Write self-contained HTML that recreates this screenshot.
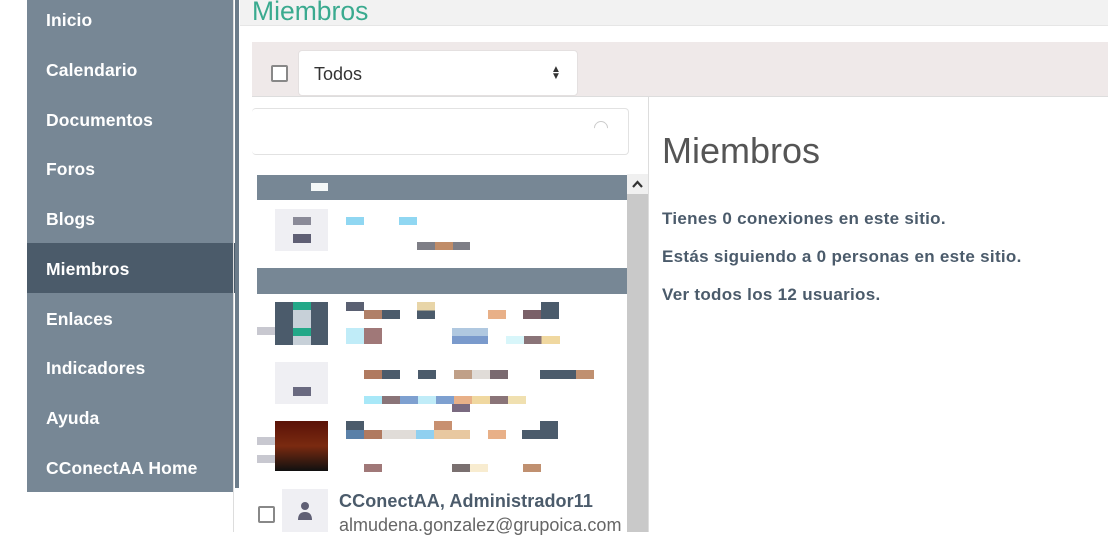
<!DOCTYPE html>
<html><head><meta charset="utf-8"><style>
*{margin:0;padding:0;box-sizing:border-box}
body{width:1108px;height:532px;overflow:hidden;background:#fff;font-family:"Liberation Sans",sans-serif;position:relative}
.a{position:absolute}
.nav{left:27px;top:0;width:206px;height:492px;background:#778795}
.nav div{position:absolute;left:0;width:212px;height:50px;color:#fff;font-weight:bold;font-size:17.5px;padding-left:19px;line-height:50px;letter-spacing:0.1px}
.b{position:absolute}
</style></head><body>
<div class="a nav">
<div style="top:-5px">Inicio</div>
<div style="top:45px">Calendario</div>
<div style="top:95px">Documentos</div>
<div style="top:144px">Foros</div>
<div style="top:194px">Blogs</div>
<div style="top:243px;background:#4b5b6a;line-height:52px">Miembros</div>
<div style="top:294px">Enlaces</div>
<div style="top:343px">Indicadores</div>
<div style="top:393px">Ayuda</div>
<div style="top:443px">CConectAA Home</div>
</div>
<div class="a" style="left:233px;top:0;width:1px;height:532px;background:#ddd"></div>
<div class="a" style="left:235px;top:0;width:4px;height:488px;background:#6c7c8a"></div>
<div class="a" style="left:240px;top:0;width:868px;height:26px;background:#f2f2f2;border-bottom:1px solid #e6e6e6"></div>
<div class="a" style="left:252px;top:-4px;font-size:26.5px;color:#3aaa8f">Miembros</div>
<div class="a" style="left:252px;top:42px;width:856px;height:55px;background:#efe9e9;border-bottom:1px solid #ddd"></div>
<div class="a" style="left:271px;top:65px;width:17px;height:17px;border:2px solid #888;border-radius:2px;background:#fff"></div>
<div class="a" style="left:298px;top:50px;width:280px;height:46px;background:#fff;border-radius:4px;border:1px solid #e4e0e0"></div>
<div class="a" style="left:314px;top:64px;font-size:18px;color:#333">Todos</div>
<div class="a" style="left:551px;top:66px;font-size:10px;line-height:7px;color:#333">▲<br>▼</div>
<div class="a" style="left:648px;top:97px;width:1px;height:435px;background:#ddd"></div>
<div class="a" style="left:252px;top:108px;width:377px;height:47px;border:1px solid #e2e2e2;border-radius:4px;border-left:none"></div>
<div class="a" style="left:594px;top:121px;width:14px;height:14px;border:1.5px solid #ccc;border-radius:50%;border-bottom-color:transparent;border-left-color:transparent;transform:rotate(-45deg)"></div>
<div class="a" style="left:627px;top:174px;width:21px;height:358px;background:#c9c9c9"></div>
<div class="a" style="left:627px;top:174px;width:21px;height:20px;background:#f0f0f0"></div>
<svg class="a" style="left:631px;top:178px" width="13" height="12"><path d="M2 9 L6.5 4 L11 9" stroke="#333" stroke-width="2.2" fill="none"/></svg>
<div class="a" style="left:257px;top:175px;width:370px;height:25px;background:#778795"></div>
<div class="a" style="left:311px;top:183px;width:17px;height:8px;background:#f4f8f8"></div>
<div class="a" style="left:257px;top:268px;width:370px;height:26px;background:#778795"></div>
<div class="b" style="left:275px;top:209px;width:53px;height:42px;background:#efeff3"></div>
<div class="b" style="left:293px;top:217px;width:18px;height:8px;background:#8a8a98"></div>
<div class="b" style="left:293px;top:234px;width:18px;height:9px;background:#5f5f74"></div>
<div class="b" style="left:346px;top:217px;width:18px;height:8px;background:#90d7f2"></div>
<div class="b" style="left:399px;top:217px;width:18px;height:8px;background:#90d7f2"></div>
<div class="b" style="left:417px;top:242px;width:53px;height:8px;background:#7e7e86"></div>
<div class="b" style="left:435px;top:242px;width:18px;height:8px;background:#c08c68"></div>
<div class="b" style="left:275px;top:302px;width:53px;height:43px;background:#4b5b6b"></div>
<div class="b" style="left:293px;top:302px;width:18px;height:43px;background:#c7d0d8"></div>
<div class="b" style="left:293px;top:302px;width:18px;height:8px;background:#23a888"></div>
<div class="b" style="left:293px;top:328px;width:18px;height:8px;background:#23a888"></div>
<div class="b" style="left:346px;top:302px;width:18px;height:9px;background:#5a6072"></div>
<div class="b" style="left:364px;top:310px;width:36px;height:9px;background:linear-gradient(90deg,#b08068 50%,#4b5b6b 50%)"></div>
<div class="b" style="left:417px;top:302px;width:18px;height:17px;background:linear-gradient(#e8d5a8 50%,#4b5b6b 50%)"></div>
<div class="b" style="left:488px;top:310px;width:18px;height:9px;background:#e8b088"></div>
<div class="b" style="left:523px;top:302px;width:36px;height:17px;background:linear-gradient(90deg,#fff 50%,#4b5b6b 50%)"></div>
<div class="b" style="left:523px;top:310px;width:18px;height:9px;background:#7a6068"></div>
<div class="b" style="left:346px;top:328px;width:36px;height:16px;background:linear-gradient(90deg,#c0ecf8 50%,#a07878 50%)"></div>
<div class="b" style="left:364px;top:328px;width:18px;height:8px;background:#a07878"></div>
<div class="b" style="left:452px;top:328px;width:36px;height:16px;background:linear-gradient(#b0c8e0 50%,#7a9acc 50%)"></div>
<div class="b" style="left:506px;top:336px;width:54px;height:8px;background:linear-gradient(90deg,#d8f6fa 33%,#8a7478 33% 66%,#f0d8a0 66%)"></div>
<div class="b" style="left:275px;top:362px;width:53px;height:42px;background:#efeff3"></div>
<div class="b" style="left:293px;top:387px;width:18px;height:9px;background:#6a6a80"></div>
<div class="b" style="left:364px;top:370px;width:230px;height:9px;background:linear-gradient(90deg,#b07a60 0 18px,#4b5b6b 18px 36px,#fff 36px 54px,#4b5b6b 54px 72px,#fff 72px 90px,#c0a088 90px 108px,#e0dcd8 108px 126px,#7a6a70 126px 144px,#fff 144px 176px,#4b5b6b 176px 212px,#c09070 212px 230px)"></div>
<div class="b" style="left:364px;top:396px;width:185px;height:8px;background:linear-gradient(90deg,#a8e8f8 0 18px,#8a7478 18px 36px,#7ea0d0 36px 54px,#c0ecf8 54px 72px,#7ea0d0 72px 90px,#e8b088 90px 108px,#f0d8a0 108px 126px,#8a7478 126px 144px,#f0e0b0 144px 162px,#fff 162px)"></div>
<div class="b" style="left:452px;top:404px;width:18px;height:8px;background:#7a6a80"></div>
<div class="b" style="left:275px;top:421px;width:53px;height:50px;background:linear-gradient(#5a1208,#7a2a10 50%,#101010)"></div>
<div class="b" style="left:346px;top:421px;width:18px;height:9px;background:#4b5b6b"></div>
<div class="b" style="left:434px;top:421px;width:18px;height:9px;background:#c89070"></div>
<div class="b" style="left:540px;top:421px;width:18px;height:9px;background:#4b5b6b"></div>
<div class="b" style="left:346px;top:430px;width:212px;height:9px;background:linear-gradient(90deg,#5a80a8 0 18px,#b07a60 18px 36px,#e0dcd8 36px 70px,#90d0f0 70px 88px,#e8c8a0 88px 124px,#fff 124px 142px,#e8b088 142px 160px,#fff 160px 176px,#4b5b6b 176px)"></div>
<div class="b" style="left:364px;top:464px;width:18px;height:8px;background:#a07878"></div>
<div class="b" style="left:452px;top:464px;width:36px;height:8px;background:linear-gradient(90deg,#7a7070 50%,#f8ecd0 50%)"></div>
<div class="b" style="left:523px;top:464px;width:18px;height:8px;background:#c09070"></div>
<div class="b" style="left:257px;top:327px;width:18px;height:8px;background:#c8c8d0"></div>
<div class="b" style="left:257px;top:437px;width:18px;height:8px;background:#c8c8d0"></div>
<div class="b" style="left:257px;top:455px;width:18px;height:8px;background:#c8c8d0"></div>
<div class="a" style="left:258px;top:506px;width:17px;height:17px;border:2px solid #888;border-radius:2px"></div>
<div class="a" style="left:282px;top:489px;width:46px;height:43px;background:#efeff3"></div>
<svg class="a" style="left:295px;top:500px" width="20" height="22"><circle cx="10" cy="6" r="4" fill="#5f5f74"/><path d="M3 20 Q3 12 10 12 Q17 12 17 20Z" fill="#5f5f74"/></svg>
<div class="a" style="left:339px;top:491px;font-size:18px;font-weight:bold;color:#4b5b6b;letter-spacing:0.1px">CConectAA, Administrador11</div>
<div class="a" style="left:339px;top:515px;font-size:18px;color:#666">almudena.gonzalez@grupoica.com</div>
<div class="a" style="left:662px;top:130px;font-size:36px;font-weight:300;color:#555">Miembros</div>
<div class="a" style="left:662px;top:209px;font-size:17px;font-weight:bold;color:#4b5b6b;line-height:20px;letter-spacing:0.3px">Tienes 0 conexiones en este sitio.</div>
<div class="a" style="left:662px;top:247px;font-size:17px;font-weight:bold;color:#4b5b6b;line-height:20px;letter-spacing:0.3px">Estás siguiendo a 0 personas en este sitio.</div>
<div class="a" style="left:662px;top:285px;font-size:17px;font-weight:bold;color:#4b5b6b;line-height:20px;letter-spacing:0.3px">Ver todos los 12 usuarios.</div>
</body></html>
